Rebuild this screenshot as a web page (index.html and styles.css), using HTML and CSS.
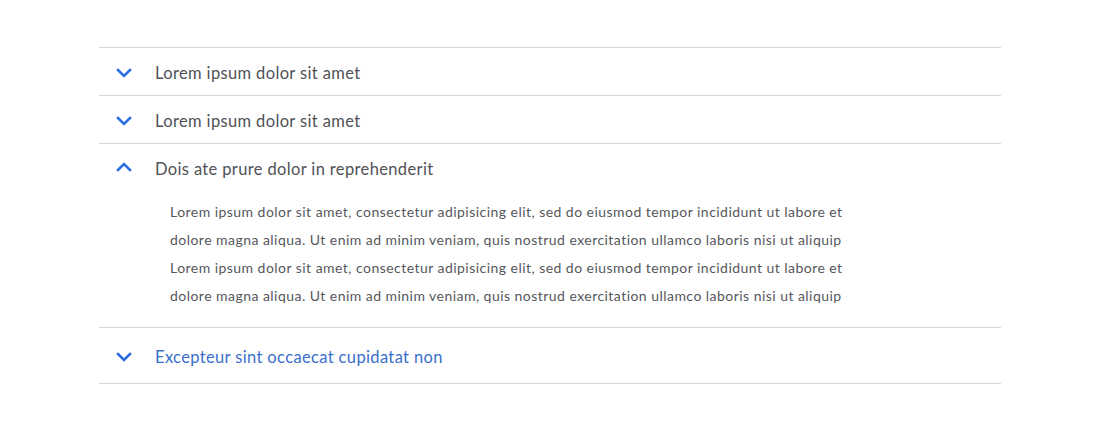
FILE: index.html
```html
<!DOCTYPE html>
<html lang="en">
<head>
<meta charset="utf-8">
<title>Accordion</title>
<link rel="stylesheet" href="styles.css">
</head>
<body>
<div class="accordion">
  <div class="item">
    <div class="head">
      <svg class="chev" width="16" height="10" viewBox="0 0 16 10"><path d="M2 2 L8 8 L14 2" /></svg>
      <span class="title">Lorem ipsum dolor sit amet</span>
    </div>
  </div>
  <div class="item">
    <div class="head">
      <svg class="chev" width="16" height="10" viewBox="0 0 16 10"><path d="M2 2 L8 8 L14 2" /></svg>
      <span class="title">Lorem ipsum dolor sit amet</span>
    </div>
  </div>
  <div class="item open">
    <div class="head">
      <svg class="chev" width="16" height="10" viewBox="0 0 16 10"><path d="M2 8 L8 2 L14 8" /></svg>
      <span class="title">Dois ate prure dolor in reprehenderit</span>
    </div>
    <div class="body">
      <p>Lorem ipsum dolor sit amet, consectetur adipisicing elit, sed do eiusmod tempor incididunt ut labore et<br>dolore magna aliqua. Ut enim ad minim veniam, quis nostrud exercitation ullamco laboris nisi ut aliquip<br>Lorem ipsum dolor sit amet, consectetur adipisicing elit, sed do eiusmod tempor incididunt ut labore et<br>dolore magna aliqua. Ut enim ad minim veniam, quis nostrud exercitation ullamco laboris nisi ut aliquip</p>
    </div>
  </div>
  <div class="item last">
    <div class="head">
      <svg class="chev" width="16" height="10" viewBox="0 0 16 10"><path d="M2 2 L8 8 L14 2" /></svg>
      <span class="title link">Excepteur sint occaecat cupidatat non</span>
    </div>
  </div>
</div>
</body>
</html>
```
FILE: styles.css
```css
html, body {
  margin: 0;
  padding: 0;
  background: #ffffff;
}
body {
  font-family: Lato, "Open Sans", "Liberation Sans", sans-serif;
}
.accordion {
  width: 902px;
  margin: 47px 0 0 99px;
  border-top: 1px solid #d7d7d7;
}
.item {
  border-bottom: 1px solid #d7d7d7;
}
.head {
  height: 47px;
  display: flex;
  align-items: center;
  padding-left: 17px;
}
.last .head {
  height: 55px;
}
.chev {
  flex: none;
  fill: none;
  stroke: #2c6de4;
  stroke-width: 2.6;
  stroke-linecap: square;
  margin-right: 23px;
  margin-top: 3px;
}
.open .chev {
  margin-top: -1px;
}
.title {
  font-size: 16.5px;
  color: #505257;
  letter-spacing: 0.36px;
  padding-top: 2px;
}
.open .title {
  padding-top: 2px;
}
.title.link {
  color: #3a6fcb;
}
.body {
  padding: 7px 0 17px 71px;
}
.body p {
  margin: 0;
  font-size: 14px;
  line-height: 28px;
  color: #55575c;
  letter-spacing: 0.46px;
  white-space: nowrap;
}
```
